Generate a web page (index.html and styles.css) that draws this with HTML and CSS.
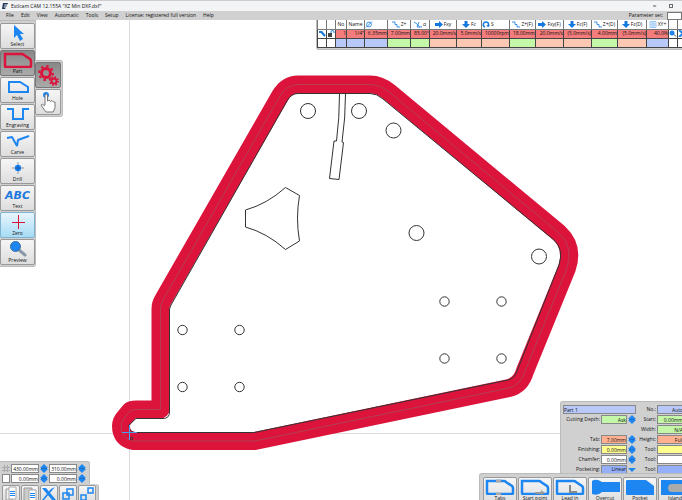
FILE: index.html
```html
<!DOCTYPE html>
<html lang="en">
<head>
    <meta charset="UTF-8">
    <meta name="viewport" content="width=device-width, initial-scale=1.0">
    <title>Estlcam CAM 12.155A "XZ Min DXF.dxf"</title>
    <link rel="stylesheet" href="styles.css">
</head>
<body>

    <!-- shared icons -->
    <svg class="defs" aria-hidden="true">
        <symbol id="i-step" viewBox="0 0 8 9"><path d="M4 0L8 4H0ZM0 5H8L4 9Z" fill="#1e86f0"/><path d="M1 4H7V5H1Z" fill="#1a6fc8"/></symbol>
        <symbol id="i-steps" viewBox="0 0 8 7"><path d="M0 1H3V3.500H5V6H8" fill="none" stroke="#3a8fe8"/></symbol>
        <symbol id="i-right" viewBox="0 0 8 7"><path d="M0 2H4V0L8 3.500L4 7V5H0Z" fill="#1478dc"/></symbol>
        <symbol id="i-down" viewBox="0 0 8 7"><path d="M2.500 0H5.500V3H8L4 7L0 3H2.500Z" fill="#1478dc"/></symbol>
        <symbol id="i-part" viewBox="0 0 30 17"><path d="M2 3H19Q20 3 21 4L27 8Q28 9 28 10V15Q28 16 27 16H3Q2 16 2 15Z" fill="none" stroke="currentColor" stroke-width="2.500"/></symbol>
    </svg>

    <header class="titlebar">
        <svg class="logo" viewBox="0 0 6 6"><path d="M1 0H6L5.500 1.500H2.500L2.300 2.400H5L4.500 3.600H2L1.800 4.500H4L3 6H0Z" fill="#243a5c"/></svg>
        <h1>Estlcam CAM 12.155A "XZ Min DXF.dxf"</h1>
        <div class="window-buttons">
            <button aria-label="Minimize"><svg viewBox="0 0 5 5"><path d="M0 2.500H4" stroke="#333"/></svg></button>
            <button aria-label="Maximize"><svg viewBox="0 0 5 5"><path d="M.5 .5H4.500V4.500H.5Z" fill="none" stroke="#333"/></svg></button>
        </div>
    </header>

    <nav class="menubar">
        <button>File</button>
        <button>Edit</button>
        <button>View</button>
        <button>Automatic</button>
        <button>Tools</button>
        <button>Setup</button>
        <button>License: registered full version</button>
        <button>Help</button>
        <label for="paramSet">Parameter set:</label>
        <input type="text" id="paramSet">
    </nav>

    <main class="workspace">

        <svg class="drawing" viewBox="0 20 682 480" preserveAspectRatio="xMinYMin meet">
            <g fill="none">
                <path d="M129.500 20V500M0 433.500H682" stroke="#dcdcdc"/>
                <!-- tool path, cutter width and centre line -->
                <path d="M298 84.500H370Q380 84.500 389 92L559 233Q574 247 567 268L525 371Q521 385 509 388L255 441H134Q121 439 121 426Q121 421 125 417L130 411Q132 409.500 136 409.500H160.500V309Q160.500 304 163 300L280 96Q287 84.500 298 84.500Z" stroke="#dc143c" stroke-width="18" stroke-linejoin="round"/>
                <path d="M298 84.500H370Q380 84.500 389 92L559 233Q574 247 567 268L525 371Q521 385 509 388L255 441H134Q121 439 121 426Q121 421 125 417L130 411Q132 409.500 136 409.500H160.500V309Q160.500 304 163 300L280 96Q287 84.500 298 84.500Z" stroke="#b23f52"/>
                <g stroke="#333">
                    <path d="M298 93.500H370Q377 93.500 383 99L554 240Q564 249 559 265L517 371Q515 378 508 380L254 432.500H134Q129 431 129 425L136 418.500H163Q169.500 418.500 169.500 412V309L171 305L287 101Q291 93.500 298 93.500Z"/>
                    <path d="M339.500 94Q339.500 118 336.500 141H334L329.500 178.500L339 179.500L343.500 142.500L342 142Q345.500 118 345.500 94"/>
                    <path d="M245.500 210Q267 204 285.500 187.500L299.500 195.500Q295.500 218 299.500 241L285.500 249.500Q267 233 245.500 227Z"/>
                    <circle cx="308" cy="111" r="7.500"/>
                    <circle cx="359" cy="111" r="7.500"/>
                    <circle cx="393.500" cy="130.500" r="7.500"/>
                    <circle cx="416.500" cy="233" r="7.500"/>
                    <circle cx="539" cy="256.500" r="7.500"/>
                    <circle cx="182.500" cy="330" r="4.700"/>
                    <circle cx="239.500" cy="330" r="4.700"/>
                    <circle cx="182.500" cy="387" r="4.700"/>
                    <circle cx="239.500" cy="387" r="4.700"/>
                    <circle cx="444.500" cy="301.500" r="4.700"/>
                    <circle cx="501.500" cy="301.500" r="4.700"/>
                    <circle cx="444.500" cy="358.500" r="4.700"/>
                    <circle cx="501.500" cy="358.500" r="4.700"/>
                    <circle cx="131.500" cy="438.500" r="1.200"/>
                </g>
                <!-- origin marker -->
                <path d="M129.500 425V440M122 432.500H137" stroke="#4b9cf5"/>
            </g>
        </svg>

        <div class="toolbar">
            <button class="tool"><svg viewBox="0 0 30 17"><path d="M11 1L21 10H17L20 15L17 17L14 11L11 14Z" fill="#1e86f0"/></svg>Select</button>
            <button class="tool pressed"><svg class="red"><use href="#i-part"/></svg>Part</button>
            <button class="tool"><svg viewBox="0 0 30 17"><path d="M6 4H17L25 9V14H6Z" fill="none" stroke="#1e86f0" stroke-width="2"/></svg>Hole</button>
            <button class="tool"><svg viewBox="0 0 30 17"><path d="M4 4H10V14H20V4H26" fill="none" stroke="#1e86f0" stroke-width="2"/></svg>Engraving</button>
            <button class="tool"><svg viewBox="0 0 30 17"><path d="M4 6L9 5L14 14L15 8L26 4" fill="none" stroke="#1e86f0" stroke-width="2" stroke-linejoin="bevel"/></svg>Carve</button>
            <button class="tool"><svg viewBox="0 0 30 17"><path d="M15 3V15M9 9H21" stroke="#99a"/><circle cx="15" cy="9" r="3.200" fill="#1e86f0"/><path d="M15 6.500V11.500M12.500 9H17.500" stroke="#1258b0"/></svg>Drill</button>
            <button class="tool"><span class="abc">ABC</span>Text</button>
            <button class="tool hot"><svg viewBox="0 0 30 17"><path d="M15.500 2V16M9 9.500H22" stroke="#dc143c"/></svg>Zero</button>
            <button class="tool"><svg viewBox="0 0 30 17"><path d="M16 10L22 15" stroke="#8898a6" stroke-width="3" stroke-linecap="round"/><circle cx="12.500" cy="6.500" r="5" fill="#1e86f0" stroke="#3d6f9e"/></svg>Preview</button>
        </div>

        <div class="flyout">
            <button class="mode pressed" aria-label="Automatic selection">
                <svg viewBox="0 0 24 24"><g fill="none" stroke="#dc143c"><circle cx="10" cy="10" r="4.500" stroke-width="3"/><circle cx="10" cy="10" r="7" stroke-width="2" stroke-dasharray="2.500 3"/><circle cx="18" cy="18" r="2.500" stroke-width="2"/><circle cx="18" cy="18" r="4.200" stroke-width="1.500" stroke-dasharray="1.700 1.600"/></g></svg>
            </button>
            <button class="mode" aria-label="Manual selection">
                <svg viewBox="0 0 24 24"><circle cx="10" cy="5" r="3" fill="#1e86f0"/><path d="M9 15V5Q10 3 11.500 5V11L13 10L14.500 11.500L16 10.500L17.500 12L19 12V18L17 22H10L5 15Q6 13 9 16" fill="#fff" stroke="#777"/></svg>
            </button>
        </div>

        <div class="tool-list">
            <table>
                <colgroup>
                    <col class="w9"><col class="w9"><col class="w11"><col class="w18"><col class="w23"><col class="w23"><col class="w19"><col class="w27"><col class="w25"><col class="w28"><col class="w26"><col class="w28"><col class="w28"><col class="w26"><col class="w29"><col class="w22"><col class="w9"><col class="w9">
                </colgroup>
                <thead>
                    <tr>
                        <th></th>
                        <th></th>
                        <th>No</th>
                        <th>Name</th>
                        <th class="left"><svg viewBox="0 0 8 7"><path d="M1 6.500L7 .5" stroke="#3a8fe8"/><circle cx="4" cy="3.500" r="2.400" fill="none" stroke="#3a8fe8"/></svg></th>
                        <th><svg><use href="#i-steps"/></svg>Z+</th>
                        <th><svg viewBox="0 0 8 7"><path d="M0 1L3 3L6 6M5 1L3 6H8" fill="none" stroke="#3a8fe8"/></svg>α</th>
                        <th><svg><use href="#i-right"/></svg>Fxy</th>
                        <th><svg><use href="#i-down"/></svg>Fz</th>
                        <th class="left"><svg viewBox="0 0 8 7"><path d="M3 6A2.600 2.600 0 1 1 6.500 4" fill="none" stroke="#1478dc" stroke-width="1.500"/><path d="M4.500 4H8L6 6.500Z" fill="#1478dc"/></svg>S</th>
                        <th><svg><use href="#i-steps"/></svg>Z+(F)</th>
                        <th><svg><use href="#i-right"/></svg>Fxy(F)</th>
                        <th><svg><use href="#i-down"/></svg>Fz(F)</th>
                        <th><svg><use href="#i-steps"/></svg>Z+(D)</th>
                        <th><svg><use href="#i-down"/></svg>Fz(D)</th>
                        <th><svg viewBox="0 0 8 7"><path d="M1 .5H7V6.500H1ZM3 2H5V5H3Z" fill="#e0eeff" stroke="#9cc6f5"/></svg>XY+</th>
                        <th></th>
                        <th></th>
                    </tr>
                </thead>
                <tbody>
                    <tr class="active">
                        <td class="plain"><svg viewBox="0 0 8 7"><path d="M1 2H3.500L7 6" fill="none" stroke="#1478dc" stroke-width="2"/></svg></td>
                        <td class="plain"><svg viewBox="0 0 8 7"><path d="M1 3H5V7H1Z" fill="#444"/><path d="M4 3V2Q4 .5 5.500 .5T7 2V3" fill="none" stroke="#1478dc"/></svg></td>
                        <td>1</td>
                        <td>1/4"</td>
                        <td>6.35mm</td>
                        <td>7.00mm</td>
                        <td>85.00°</td>
                        <td>20.0mm/s</td>
                        <td>5.0mm/s</td>
                        <td>10000rpm</td>
                        <td>18.00mm</td>
                        <td>20.0mm/s</td>
                        <td>(5.0mm/s)</td>
                        <td>4.00mm</td>
                        <td>(5.0mm/s)</td>
                        <td>40.0%</td>
                        <td class="plain"><svg viewBox="0 0 8 7"><circle cx="3" cy="3" r="2.500" fill="#1e86f0"/><path d="M5 4.500L7 6.500" stroke="#345"/></svg></td>
                        <td class="plain"><svg viewBox="0 0 8 7"><path d="M1 0L5 3.500L1 7" fill="none" stroke="#1e86f0" stroke-width="2"/></svg></td>
                    </tr>
                    <tr>
                        <td></td>
                        <td></td>
                        <td class="blue"></td>
                        <td class="blue"></td>
                        <td class="blue"></td>
                        <td class="green"></td>
                        <td class="green"></td>
                        <td class="peach"></td>
                        <td class="peach"></td>
                        <td class="peach"></td>
                        <td class="green"></td>
                        <td class="peach"></td>
                        <td class="peach"></td>
                        <td class="green"></td>
                        <td class="peach"></td>
                        <td class="blue"></td>
                        <td></td>
                        <td></td>
                    </tr>
                </tbody>
            </table>
        </div>

        <div class="grid-panel">
            <div class="grid-size">
                <svg viewBox="0 0 8 9"><path d="M2.500 1V8M5.500 1V8M0 3.500H8M0 6.500H8" stroke="#aaa"/></svg>
                <input type="text" value="430.00mm" aria-label="Width">
                <button class="step" aria-label="Change width"><svg><use href="#i-step"/></svg></button>
                <input type="text" value="310.00mm" aria-label="Height">
                <button class="step" aria-label="Change height"><svg><use href="#i-step"/></svg></button>
                <input type="checkbox" aria-label="Offset">
                <input type="text" value="0.00mm" aria-label="Offset X">
                <button class="step" aria-label="Change offset X"><svg><use href="#i-step"/></svg></button>
                <input type="text" value="0.00mm" aria-label="Offset Y">
                <button class="step" aria-label="Change offset Y"><svg><use href="#i-step"/></svg></button>
            </div>
            <div class="edit-tools">
                <button aria-label="Copy"><svg viewBox="0 0 16 16"><path d="M3 3H9V14H3Z" fill="#eee" stroke="#999"/><path d="M6 1H13V13H6Z" fill="#fff" stroke="#aaa"/><path d="M7 5.500H12M7 7.500H12M7 9.500H12" stroke="#1e86f0"/></svg></button>
                <button aria-label="Paste"><svg viewBox="0 0 16 16"><path d="M2 2H10V15H2Z" fill="#ccc" stroke="#999"/><path d="M7 4H14V15H7Z" fill="#fff" stroke="#aaa"/><path d="M8 7.500H13M8 9.500H13M8 11.500H13" stroke="#1e86f0"/></svg></button>
                <button aria-label="Delete"><svg viewBox="0 0 16 16"><path d="M1 2H5L15 14H11ZM14 1L3 14H1L10 3Z" fill="#1e86f0"/></svg></button>
                <button aria-label="Group"><svg viewBox="0 0 16 16"><path d="M7 3H13V9H7ZM3 7H9V13H3Z" fill="none" stroke="#1e86f0" stroke-width="1.500"/></svg></button>
                <button aria-label="Ungroup"><svg viewBox="0 0 16 16"><path d="M9 2H14V7H9ZM2 9H7V14H2Z" fill="none" stroke="#1e86f0" stroke-width="1.500"/></svg></button>
            </div>
        </div>

        <div class="part-panel">
            <div class="part-form">
                <input type="text" class="name blue" value="Part 1" aria-label="Part name">
                <label for="partNo">No.:</label>
                <input type="text" class="blue" id="partNo" value="Auto">

                <label for="depth">Cutting Depth:</label>
                <input type="text" class="green" id="depth" value="Ask">
                <button class="step" aria-label="Change cutting depth"><svg><use href="#i-step"/></svg></button>
                <label for="start">Start:</label>
                <input type="text" class="green" id="start" value="0.00mm">

                <label class="second" for="width">Width:</label>
                <input type="text" class="green" id="width" value="N/A">

                <label for="tab">Tab:</label>
                <input type="text" class="salmon" id="tab" value="7.00mm">
                <button class="step" aria-label="Change tab"><svg><use href="#i-step"/></svg></button>
                <label for="height">Height:</label>
                <input type="text" class="salmon" id="height" value="Full">

                <label for="finishing">Finishing:</label>
                <input type="text" class="yellow" id="finishing" value="0.00mm">
                <button class="step" aria-label="Change finishing"><svg><use href="#i-step"/></svg></button>
                <label for="toolFinish">Tool:</label>
                <input type="text" class="yellow" id="toolFinish">

                <label for="chamfer">Chamfer:</label>
                <input type="text" id="chamfer" value="0.00mm">
                <button class="step" aria-label="Change chamfer"><svg><use href="#i-step"/></svg></button>
                <label for="toolChamfer">Tool:</label>
                <input type="text" id="toolChamfer">

                <label for="pocketing">Pocketing:</label>
                <select class="deep" id="pocketing">
                    <option>Linear</option>
                </select>
                <svg class="caret" viewBox="0 0 8 9"><path d="M0 3H8L4 7Z" fill="#1e86f0"/></svg>
                <label for="toolPocket">Tool:</label>
                <input type="text" class="deep" id="toolPocket">
            </div>
        </div>

        <div class="part-tools">
            <button><svg viewBox="0 0 30 17" class="blue-line"><use href="#i-part"/><path d="M11 3H16M11 16H16" stroke="#aaa" stroke-width="3"/></svg>Tabs</button>
            <button><svg viewBox="0 0 30 17" class="blue-line"><use href="#i-part"/><path d="M15 14H21V12L25 15L21 17V16H15Z" fill="#999"/></svg>Start point</button>
            <button><svg viewBox="0 0 30 17" class="blue-line"><use href="#i-part"/><path d="M15 7V14H22" fill="none" stroke="#888" stroke-width="2"/></svg>Lead in</button>
            <button><svg viewBox="0 0 30 17"><path d="M2 3Q6 0 12 4H30V14H12Q8 18 2 16Z" fill="#1e86f0"/></svg>Overcut</button>
            <button><svg viewBox="0 0 30 17"><path d="M2 2H21L29 8V17H2Q1 17 1 16V3Z" fill="#1e86f0"/></svg>Pocket</button>
            <button><svg viewBox="0 0 30 17"><path d="M1 2H29V17H1Z" fill="#1e86f0"/><rect x="8" y="6" width="22" height="8" rx="4" fill="#aaa"/></svg>Island</button>
        </div>

    </main>

</body>
</html>
```

FILE: styles.css
```css
* {
    box-sizing: border-box;
}
body {
    margin: 0;
    height: 100vh;
    display: flex;
    flex-direction: column;
    overflow: hidden;
    font-family: "Open Sans", "Noto Sans", sans-serif;
    font-size: 5px;
    line-height: 7px;
    color: #111;
    background-color: #fff;
}
button, input, select {
    font: inherit;
    color: inherit;
    padding: 0;
    margin: 0;
    border: none;
    border-radius: 0;
    background: none;
    appearance: none;
}
svg {
    display: block;
}
.defs {
    position: absolute;
    width: 0;
    height: 0;
}

/* window frame */
.titlebar {
    display: flex;
    align-items: center;
    gap: 3px;
    height: 11px;
    flex: none;
    padding: 0 2px;
    background-color: #f3f4f6;
    border-top: 1px solid #ccc;
}
.titlebar h1 {
    margin: 0;
    font-size: 5px;
    font-weight: normal;
}
.logo {
    width: 6px;
    height: 6px;
}
.window-buttons {
    display: flex;
    gap: 12px;
    margin-left: auto;
    padding-right: 7px;
}
.window-buttons svg {
    width: 4px;
    height: 4px;
}
.menubar {
    display: flex;
    align-items: center;
    gap: 7px;
    height: 9px;
    flex: none;
    padding-left: 6px;
    background-color: #d0d0d0;
}
.menubar label {
    margin-left: auto;
}
.menubar input {
    width: 15px;
    height: 8px;
    margin-left: -3px;
    background-color: #fff;
    border: 1px solid #777;
}

.workspace {
    position: relative;
    flex: 1;
    overflow: hidden;
}
.drawing {
    width: 100%;
    height: 100%;
}

/* panels that float over the drawing */
.toolbar, .flyout, .tool-list, .grid-size, .edit-tools, .part-panel, .part-tools {
    background-color: #d0d0d0;
    border: 1px solid #bbb;
}
.toolbar {
    position: absolute;
    top: 0;
    left: 0;
    width: 36px;
    display: flex;
    flex-direction: column;
    gap: 1px;
    padding: 2px 0 1px;
    border-left: none;
    border-radius: 0 0 3px 0;
}
.tool, .mode, .edit-tools button, .part-tools button {
    background-image: linear-gradient(#f6f6f6, #ddd);
    border: 1px solid #999;
    border-radius: 2px;
}
.tool {
    height: 26px;
    display: flex;
    flex-direction: column;
    align-items: center;
    justify-content: space-between;
}
.tool svg {
    width: 30px;
    height: 17px;
}
.tool.pressed, .mode.pressed {
    background-image: linear-gradient(#888, #aaa);
    border-color: #777;
}
.tool.hot {
    background-image: linear-gradient(#e8f5fd, #a6dcf5);
    border-color: #7fb4d0;
}
.red {
    color: #dc143c;
}
.blue-line {
    color: #1e86f0;
}
.abc {
    font-family: "DejaVu Sans", sans-serif;
    font-size: 11px;
    font-weight: bold;
    font-style: italic;
    line-height: 19px;
    height: 17px;
    color: #1e78dc;
}
.flyout {
    position: absolute;
    top: 40px;
    left: 35px;
    display: flex;
    flex-direction: column;
    gap: 1px;
    padding: 1px 1px 1px 0;
    border-left: none;
    border-radius: 0 3px 3px 0;
}
.mode {
    width: 26px;
    height: 26px;
}
.mode svg {
    width: 24px;
    height: 24px;
}

/* tool list */
.tool-list {
    position: absolute;
    top: 0;
    right: 0;
    width: 366px;
    overflow: hidden;
    padding-bottom: 1px;
    border-width: 0 0 1px 1px;
    border-radius: 0 0 0 3px;
}
table {
    width: 369px;
    table-layout: fixed;
    border-collapse: collapse;
    background-color: #fff;
}
th, td {
    height: 9px;
    padding: 0;
    border: 1px solid #444;
    border-top: none;
    text-align: right;
    font-weight: normal;
    white-space: nowrap;
    overflow: hidden;
}
th {
    text-align: center;
    border-color: #777;
}
th.left {
    text-align: left;
}
th svg, td svg {
    display: inline-block;
    width: 8px;
    height: 7px;
    margin-right: 1px;
    vertical-align: top;
}
td svg {
    margin: 0;
}
.active td {
    background-color: #f37c7c;
}
.active td.plain {
    background-color: #fff;
}
.blue {
    background-color: #b8c8f8;
}
.green {
    background-color: #c4f8a8;
}
.peach {
    background-color: #fcc8b4;
}
.salmon {
    background-color: #ffb090;
}
.yellow {
    background-color: #ffff90;
}
.deep {
    background-color: #94b0fa;
}
.w9 { width: 9px; }
.w11 { width: 11px; }
.w18 { width: 18px; }
.w19 { width: 19px; }
.w22 { width: 22px; }
.w23 { width: 23px; }
.w25 { width: 25px; }
.w26 { width: 26px; }
.w27 { width: 27px; }
.w28 { width: 28px; }
.w29 { width: 29px; }

/* grid size and edit tools */
.grid-panel {
    position: absolute;
    left: 0;
    bottom: -4px;
    display: flex;
    flex-direction: column;
    align-items: flex-start;
}
.grid-size {
    display: grid;
    grid-template-columns: 8px 28px 8px 28px 8px;
    column-gap: 1px;
    row-gap: 1px;
    padding: 2px 3px 1px 2px;
    border-width: 1px 1px 0 0;
    border-radius: 0 3px 0 0;
}
.grid-size input, .part-form input, .part-form select {
    width: 100%;
    height: 9px;
    border: 1px solid #888;
    text-align: right;
}
.grid-size input, #chamfer, #toolChamfer {
    background-color: #fff;
}
.grid-size svg, .step svg, .caret {
    width: 8px;
    height: 9px;
}
.edit-tools {
    display: flex;
    gap: 1px;
    padding: 1px 2px;
    border-width: 0 1px 0 0;
    border-radius: 0 3px 0 0;
}
.edit-tools button {
    width: 18px;
    height: 18px;
}
.edit-tools svg {
    width: 16px;
    height: 16px;
}

/* part properties */
.part-panel {
    position: absolute;
    right: 0;
    bottom: 20px;
    width: 122px;
    overflow: hidden;
    border-width: 1px 0 0 1px;
    border-radius: 3px 0 0 3px;
}
.part-form {
    display: grid;
    grid-template-columns: 37px 26px 8px 19px 27px;
    column-gap: 1px;
    row-gap: 1px;
    width: 125px;
    padding: 3px 1px 6px 2px;
}
.part-form label {
    text-align: right;
    line-height: 9px;
}
.part-form .name {
    grid-column: span 3;
    text-align: left;
}
.part-form .second {
    grid-column: 4;
}
.part-form select {
    text-align-last: right;
}
.part-tools {
    position: absolute;
    right: 0;
    bottom: -7px;
    width: 203px;
    display: flex;
    gap: 1px;
    padding: 3px 0 3px 3px;
    overflow: hidden;
    border-width: 1px 0 0 1px;
    border-radius: 3px 0 0 0;
}
.part-tools button {
    flex: none;
    width: 34px;
    height: 27px;
    display: flex;
    flex-direction: column;
    align-items: center;
}
.part-tools svg {
    width: 30px;
    height: 17px;
    flex: none;
}
```
